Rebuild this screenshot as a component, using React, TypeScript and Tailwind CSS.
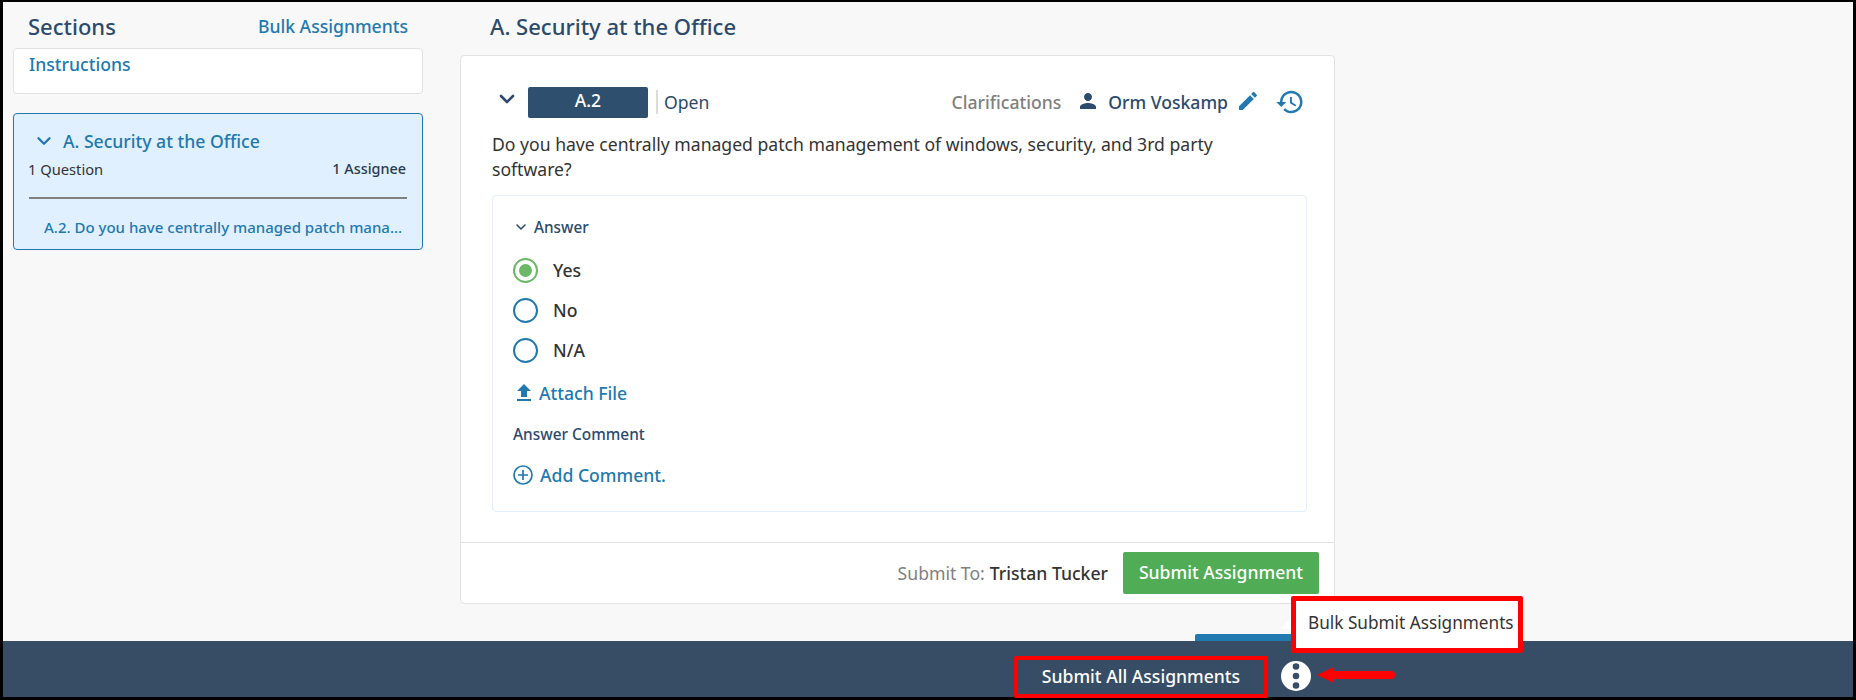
import { ChevronDown } from "lucide-react"

const font = "font-['Noto_Sans',sans-serif]"

function MaterialIcon({ d, className }: { d: string; className: string }) {
  return (
    <svg viewBox="0 0 24 24" fill="currentColor" className={className}>
      <path d={d} />
    </svg>
  )
}

const personPath =
  "M12 12c2.21 0 4-1.79 4-4s-1.79-4-4-4-4 1.79-4 4 1.79 4 4 4zm0 2c-2.67 0-8 1.34-8 4v2h16v-2c0-2.66-5.33-4-8-4z"
const editPath =
  "M3 17.25V21h3.75L17.81 9.94l-3.75-3.75L3 17.25zM20.71 7.04c.39-.39.39-1.02 0-1.41l-2.34-2.34c-.39-.39-1.02-.39-1.41 0l-1.83 1.83 3.75 3.75 1.83-1.83z"
const historyPath =
  "M13 3c-4.97 0-9 4.03-9 9H1l3.89 3.89.07.14L9 12H6c0-3.87 3.13-7 7-7s7 3.13 7 7-3.13 7-7 7c-1.93 0-3.68-.79-4.94-2.06l-1.42 1.42C8.27 19.99 10.51 21 13 21c4.97 0 9-4.03 9-9s-4.03-9-9-9zm-1 5v5l4.28 2.54.72-1.21-3.5-2.08V8H12z"
const uploadPath = "M9 16h6v-6h4l-7-7-7 7h4zm-4 2h14v2H5z"

function Radio({ label, checked }: { label: string; checked?: boolean }) {
  return (
    <div className="flex h-10 items-center">
      <span
        className={`flex h-[25px] w-[25px] items-center justify-center rounded-full border-[2.5px] bg-white ${
          checked ? "border-[#6cb867]" : "border-[#2279b0]"
        }`}
      >
        {checked && <span className="h-[13px] w-[13px] rounded-full bg-[#6cb867]" />}
      </span>
      <span className="ml-[15px] text-[17.6px] font-medium text-[#333333]">{label}</span>
    </div>
  )
}

function Sidebar() {
  return (
    <aside className="ml-[10px] flex w-[410px] flex-col">
      <div className="flex h-[46px] items-center justify-between px-[15px] pt-[3px]">
        <h2 className="text-[22px] font-medium text-[#2c4a6b]">Sections</h2>
        <a className="text-[17.6px] font-medium text-[#2279b0]">Bulk Assignments</a>
      </div>
      <div className="h-[46px] rounded-[4px] border border-[#e2e2e2] bg-white pl-[15px]">
        <span className="block text-[17.6px] leading-[30px] font-medium text-[#2279b0]">Instructions</span>
      </div>
      <div className="mt-[19px] h-[137px] rounded-[4px] border border-[#2279b0] bg-[#e1f0fe] px-[15px]">
        <div className="flex items-center pt-[15px]">
          <ChevronDown className="ml-[4px] h-[22px] w-[22px] text-[#2279b0]" strokeWidth={2.6} />
          <span className="ml-[8px] text-[17.6px] leading-6 font-medium text-[#2279b0]">A. Security at the Office</span>
        </div>
        <div className="flex items-center justify-between pt-[4px] leading-6">
          <span className="ml-[-1px] text-[14.7px] text-[#333333]">1 Question</span>
          <span className="mr-[1px] text-[14.4px] font-medium text-[#2b3a4d]">1 Assignee</span>
        </div>
        <div className="mt-[16px] border-t-2 border-[#808080]" />
        <p className="mt-[16px] truncate pl-[15px] text-[15px] leading-6 font-medium text-[#2279b0]">
          A.2. Do you have centrally managed patch mana...
        </p>
      </div>
    </aside>
  )
}

function QuestionCard() {
  return (
    <section className="mt-[7px] w-[875px] rounded-[4px] border border-[#e2e2e2] bg-white">
      <div className="flex h-[76px] items-start pl-[34px] pr-[29px] pt-[31px]">
        <ChevronDown className="h-[24px] w-[24px] text-[#2c4a6b]" strokeWidth={2.6} />
        <div className="ml-[9px] flex h-[31px] w-[120px] justify-center rounded-[2px] bg-[#2f4f6f] text-[17.6px] leading-[26px] font-medium text-white">
          A.2
        </div>
        <span className="ml-[8px] mt-[3px] h-[24px] w-[2px] bg-[#dcdcdc]" />
        <span className="ml-[6px] text-[17.6px] leading-[30px] text-[#2c4a6b]">Open</span>
        <span className="ml-auto text-[17.6px] leading-[30px] font-medium text-[#808080]">Clarifications</span>
        <MaterialIcon d={personPath} className="ml-[15px] mt-[2px] h-[24px] w-[24px] text-[#2c4a6b]" />
        <span className="ml-[8px] text-[17.6px] leading-[30px] font-medium text-[#2c4a6b]">Orm Voskamp</span>
        <MaterialIcon d={editPath} className="ml-[8px] mt-[2px] h-[24px] w-[24px] text-[#2279b0]" />
        <MaterialIcon d={historyPath} className="ml-[15px] h-[30px] w-[30px] text-[#2279b0]" />
      </div>
      <p className="w-[790px] pl-[31px] text-[17.6px] leading-[25px] text-[#333333]">
        Do you have centrally managed patch management of windows, security, and 3rd party software?
      </p>
      <div className="ml-[31px] mr-[27px] mt-[13px] h-[317px] rounded-[4px] border border-[#e3effa] pl-[20px] pt-[19px]">
        <div className="flex items-center text-[15.3px] leading-6 font-medium text-[#2c4a6b]">
          <ChevronDown className="mr-[5px] h-[16px] w-[16px]" strokeWidth={2.4} />
          Answer
        </div>
        <div className="mt-[11px]">
          <Radio label="Yes" checked />
          <Radio label="No" />
          <Radio label="N/A" />
        </div>
        <div className="mt-[11px] flex items-center text-[17.6px] leading-6 font-medium text-[#2279b0]">
          <MaterialIcon d={uploadPath} className="ml-[-1px] mr-[3px] h-[24px] w-[24px]" />
          Attach File
        </div>
        <div className="mt-[18px] text-[15.4px] leading-6 font-medium text-[#2c4a6b]">Answer Comment</div>
        <div className="mt-[16px] flex items-center text-[17.6px] leading-6 font-medium text-[#2279b0]">
          <svg viewBox="0 0 20 20" fill="none" stroke="currentColor" strokeWidth="1.7" className="mr-[7px] h-[20px] w-[20px]">
            <circle cx="10" cy="10" r="9" />
            <path d="M10 5v10M5 10h10" />
          </svg>
          Add Comment.
        </div>
      </div>
      <div className="mt-[30px] flex h-[61px] items-center justify-end border-t border-[#e2e2e2] pr-[15px]">
        <span className="text-[17.6px] text-[#808080]">Submit To:</span>
        <span className="ml-[5px] text-[17.6px] font-medium text-[#333333]">Tristan Tucker</span>
        <button className="ml-[15px] h-[42px] w-[196px] rounded-[2px] bg-[#50ad55] pb-[2px] text-[17.6px] font-medium text-white">
          Submit Assignment
        </button>
      </div>
    </section>
  )
}

function FooterBar() {
  return (
    <footer className="relative flex h-[56px] shrink-0 items-start bg-[#374d66] pl-[1011px] pt-[15px]">
      <div className="absolute bottom-full left-[1192px] h-[7px] w-[100px] rounded-t-[2px] bg-[#2279b0]" />
      <button className="h-[42px] w-[254px] rounded-[2px] border-[4px] border-[#ff0000] pb-[2px] text-[17.6px] font-medium text-white">
        Submit All Assignments
      </button>
      <svg viewBox="0 0 30 30" className="ml-[13px] mt-[5px] h-[30px] w-[30px]">
        <circle cx="15" cy="15" r="15" fill="#fff" />
        <circle cx="15" cy="5.5" r="3.3" fill="#374d66" />
        <circle cx="15" cy="15" r="3.3" fill="#374d66" />
        <circle cx="15" cy="24.5" r="3.3" fill="#374d66" />
      </svg>
      <svg viewBox="0 0 78 16" className="absolute left-[1314px] top-[26px] h-4 w-[78px]">
        <path d="M0 8 L17 0 L17 4 L74 4 A4 4 0 0 1 74 12 L17 12 L17 16 Z" fill="#ff0000" />
      </svg>
      <svg viewBox="0 0 12 12" className="absolute left-[1277px] top-[-24px] h-3 w-3">
        <path d="M0 12 L12 0 L12 12 Z" fill="#fff" />
      </svg>
      <div className="absolute left-[1288px] top-[-45px] flex h-[57px] w-[232px] items-center rounded-[2px] border-[5px] border-[#ff0000] bg-white pb-[3px] pl-[12px] text-[17.2px] text-[#333333]">
        Bulk Submit Assignments
      </div>
    </footer>
  )
}

export default function App() {
  return (
    <div className={`${font} flex h-[700px] w-[1856px] flex-col border-x-[3px] border-b-[3px] border-t-[2px] border-black bg-[#f8f8f8]`}>
      <div className="flex flex-1 items-start">
        <Sidebar />
        <main className="ml-[37px] flex flex-col">
          <h1 className="flex h-[46px] items-center pl-[30px] pt-[3px] text-[22px] font-medium text-[#2c4a6b]">
            A. Security at the Office
          </h1>
          <QuestionCard />
        </main>
      </div>
      <FooterBar />
    </div>
  )
}
